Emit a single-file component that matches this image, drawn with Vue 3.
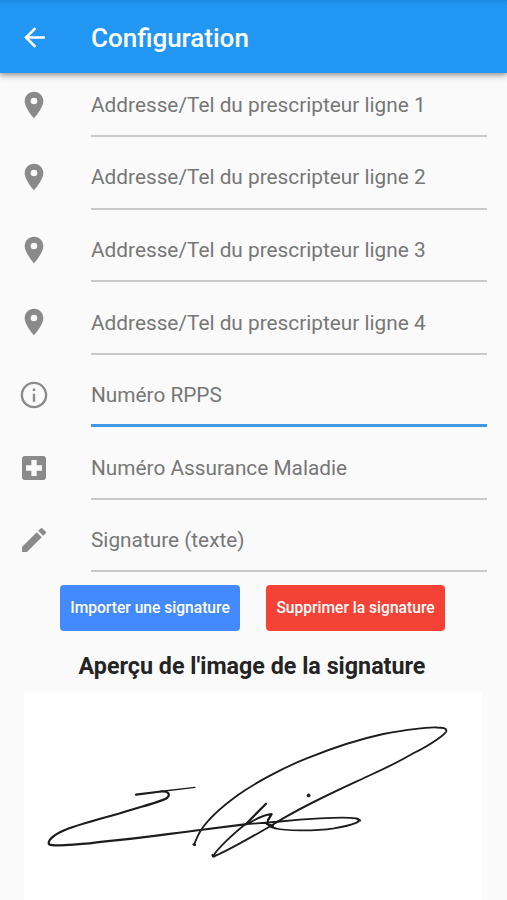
<script setup>
const icons = {
  place: 'M12 2C8.13 2 5 5.13 5 9c0 5.25 7 13 7 13s7-7.75 7-13c0-3.87-3.13-7-7-7zm0 9.500a2.500 2.500 0 0 1 0-5 2.500 2.500 0 0 1 0 5z',
  info: 'M11.100 17h1.800v-6h-1.800v6zm.9-15C6.480 2 2 6.480 2 12s4.480 10 10 10 10-4.480 10-10S17.520 2 12 2zm0 18.200c-4.520 0-8.200-3.680-8.200-8.200s3.680-8.200 8.200-8.200 8.200 3.680 8.200 8.200-3.680 8.200-8.200 8.200zM11.100 9h1.800V7.200h-1.800V9z',
  hospital: 'M19 3H5c-1.100 0-1.990.900-1.990 2L3 19c0 1.100.900 2 2 2h14c1.100 0 2-.900 2-2V5c0-1.100-.900-2-2-2zm-1 11h-4v4h-4v-4H6v-4h4V6h4v4h4v4z',
  edit: 'M3 17.250V21h3.750L17.810 9.940l-3.750-3.750L3 17.250zM20.710 7.040a1 1 0 0 0 0-1.410l-2.340-2.340a1 1 0 0 0-1.410 0l-1.830 1.830 3.750 3.750 1.830-1.830z'
}

const fields = [
  { icon: 'place', label: 'Addresse/Tel du prescripteur ligne 1' },
  { icon: 'place', label: 'Addresse/Tel du prescripteur ligne 2' },
  { icon: 'place', label: 'Addresse/Tel du prescripteur ligne 3' },
  { icon: 'place', label: 'Addresse/Tel du prescripteur ligne 4' },
  { icon: 'info', label: 'Numéro RPPS', active: true },
  { icon: 'hospital', label: 'Numéro Assurance Maladie' },
  { icon: 'edit', label: 'Signature (texte)' }
]
</script>

<template>
  <div class="screen">
    <header class="bar">
      <svg class="icon back" viewBox="0 0 24 24"><path d="M20 11H7.830l5.590-5.590L12 4l-8 8 8 8 1.410-1.410L7.830 13H20v-2z" /></svg>
      <h1 class="title">Configuration</h1>
    </header>
    <main>
      <div class="fields">
        <div v-for="f in fields" :key="f.label" class="row">
          <svg class="icon" viewBox="0 0 24 24"><path :d="icons[f.icon]" /></svg>
          <div class="field" :class="{ active: f.active }"><span class="label">{{ f.label }}</span></div>
        </div>
      </div>
      <div class="actions">
        <button class="btn import">Importer une signature</button>
        <button class="btn remove">Supprimer la signature</button>
      </div>
      <h2 class="heading"><span>Aperçu de l'image de la signature</span></h2>
      <div class="preview">
        <svg class="ink" viewBox="24 692 458 208">
          <path class="thick" d="M136 794.700L161 791.500C168 791 171 794 167 798C161 802 139 807 120 813.300C98 819.500 77 825 66.700 829.300C53 834.500 46 842 49.500 844.500C54 847 91 843.500 103 841.700C145 838 167 834 200 830L246.700 824.200" />
          <path class="fine" d="M160 791.500L195 787.300" />
          <path d="M246.700 824.200L280 821.500C299 819.500 342 816 356 818.300C365 821 353 825 334 828.300C312 831.500 284 830.500 276 828.500C269 827 266 824 268 820.500L271.500 814C264 815 254 820 248 823.700" />
          <path class="thick" d="M266 803.700L247 823" />
          <path d="M247 823C235 832 216 850 213 856.500C222 854 246 840 269 827C300 807 336 791 366.700 776.700C386 768 402 760 413.300 753.300C434 743 445 734 446.300 731.300C447 728 442 727.500 437 727.500C424 727 400 731 383.300 734C360 739 330 749 306.700 758.300C280 769 252 785 238 795C220 808 207 821 201 830C197 837 196 839 194.300 844.500" />
          <path class="thick" d="M268 820L271.500 814.500M267 824L273 826M193.500 844.500L195 845M212.500 855L214 856.500M357.500 819L360 820.500" />
          <circle cx="308.600" cy="795.400" r="1.900" />
        </svg>
      </div>
    </main>
  </div>
</template>

<style>
body {
  margin: 0;
  background: #fafafa;
}
</style>

<style scoped>
.screen {
  width: 507px;
  height: 900px;
  overflow: hidden;
  background: #fafafa;
  font-family: Roboto, "Liberation Sans", sans-serif;
}
.bar {
  position: relative;
  z-index: 1;
  box-sizing: border-box;
  display: flex;
  align-items: center;
  height: 73px;
  padding: 2px 18px 0;
  background: linear-gradient(#198be1, #2196f3 5px);
  color: #fff;
  box-shadow: 0 2px 5px rgba(0, 0, 0, 0.34), 0 3px 9px rgba(0, 0, 0, 0.12);
}
.icon {
  flex: none;
  width: 32px;
  height: 32px;
  fill: #8a8a8a;
}
.icon.back {
  width: 31px;
  height: 31px;
  margin-left: 0.500px;
  fill: #fff;
}
.title {
  margin: 0 0 0 41.500px;
  font-size: 26px;
  line-height: 32px;
  font-weight: 500;
}
.fields {
  margin-top: -8.700px;
}
.row {
  display: flex;
  align-items: center;
  gap: 41px;
  height: 72.600px;
  padding: 0 20px 0 18px;
}
.row > .icon {
  margin-top: 8px;
}
.field {
  box-sizing: border-box;
  flex: 1;
  height: 72.600px;
  padding-top: 26.500px;
  border-bottom: 2px solid #c9c9c9;
}
.field.active {
  border-bottom: 3px solid #3e9ae6;
}
.label {
  display: block;
  width: max-content;
  font-size: 20.800px;
  line-height: 28px;
  color: #777;
}
.actions {
  display: flex;
  gap: 26px;
  padding: 12.500px 0 0 60px;
}
.btn {
  width: 180px;
  height: 46px;
  padding: 0;
  border: 0;
  border-radius: 4px;
  color: #fff;
  font: 500 15.600px/20px Roboto, "Liberation Sans", sans-serif;
  white-space: nowrap;
}
.import {
  background: #448aff;
}
.remove {
  width: 179px;
  background: #f44336;
}
.heading {
  margin: 19.500px 0 0;
  padding-right: 3px;
  font-size: 23.300px;
  line-height: 32px;
  font-weight: 700;
  text-align: center;
  color: #242424;
}
.preview {
  width: 458px;
  height: 208px;
  margin: 10px 0 0 24px;
  background: #fff;
}
.ink {
  display: block;
  width: 458px;
  height: 208px;
  fill: none;
  stroke: #1c1c1c;
  stroke-width: 1.800;
  stroke-linecap: round;
  stroke-linejoin: round;
}
.ink .thick {
  stroke-width: 2.200;
}
.ink .fine {
  stroke-width: 1.300;
}
.ink circle {
  fill: #222;
  stroke: none;
}
</style>
